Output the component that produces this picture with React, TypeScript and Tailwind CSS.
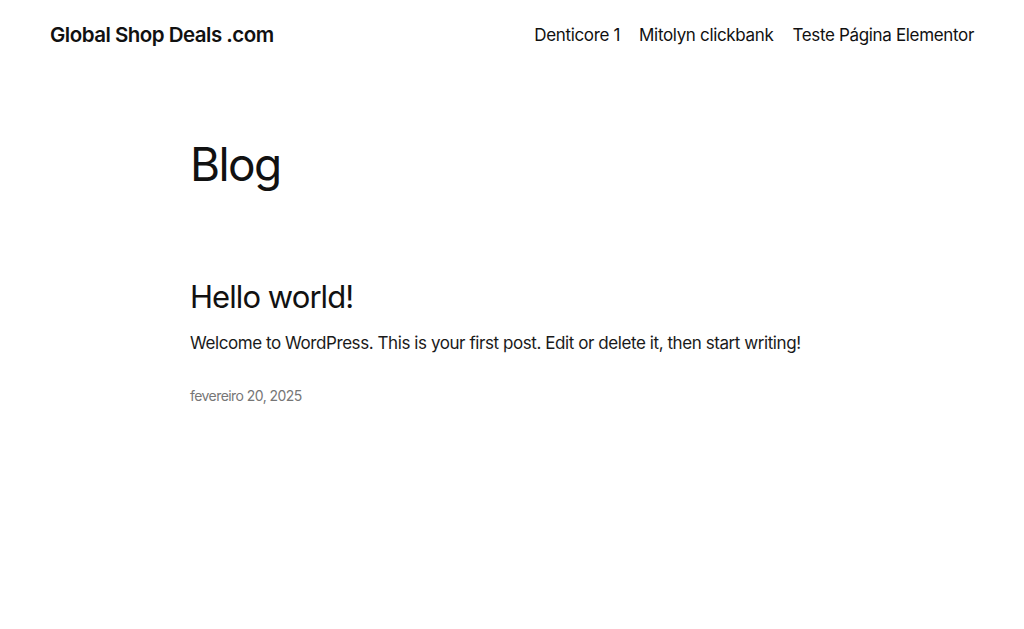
export default function App() {
  return (
    <div className="min-h-[629px] bg-white text-[#111111] font-['Inter',sans-serif]">
      <header className="flex items-center justify-between px-[50px] h-[71px]">
        <a href="#" className="text-[20.5px] font-semibold tracking-[-0.025em] text-[#111111]">
          Global Shop Deals .com
        </a>
        <nav className="flex items-center gap-[19px] text-[17px] tracking-[-0.02em] text-[#111111]">
          <a href="#">Denticore 1</a>
          <a href="#">Mitolyn clickbank</a>
          <a href="#">Teste Página Elementor</a>
        </nav>
      </header>

      <main className="pl-[190px] pr-[190px]">
        <h1 className="mt-[66px] text-[46px] leading-[1.2] tracking-[-0.035em] font-normal">Blog</h1>

        <article className="mt-[86px]">
          <h2 className="text-[31px] leading-[1.2] tracking-[-0.03em] font-normal">Hello world!</h2>
          <p className="mt-[16px] text-[17px] leading-[1.5] tracking-[-0.025em] text-[#1a1a1a]">
            Welcome to WordPress. This is your first post. Edit or delete it, then start writing!
          </p>
          <p className="mt-[28px] text-[14px] tracking-[-0.04em] text-[#767676]">fevereiro 20, 2025</p>
        </article>
      </main>
    </div>
  );
}
